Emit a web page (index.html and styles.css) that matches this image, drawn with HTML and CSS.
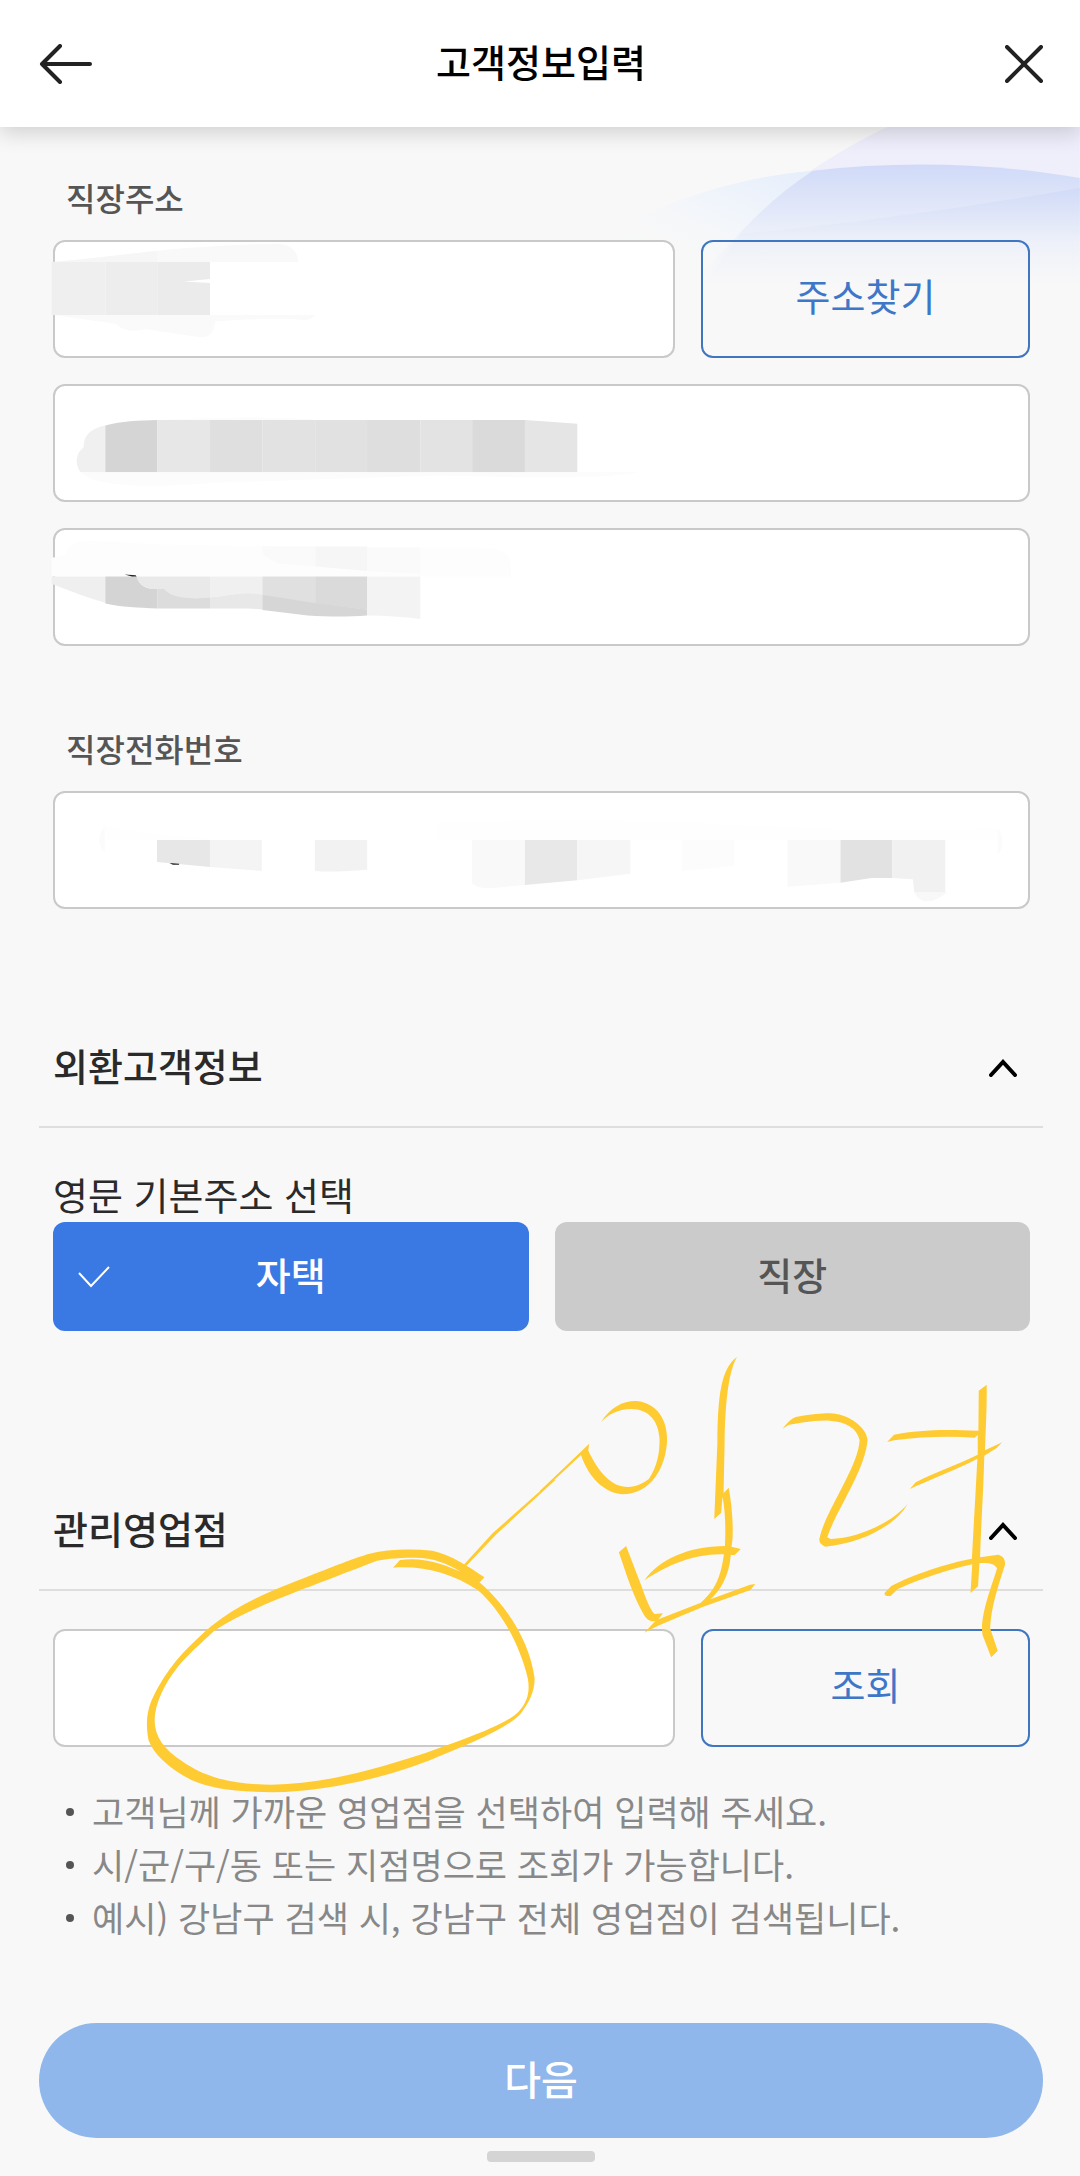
FILE: index.html
```html
<!DOCTYPE html>
<html lang="ko">
<head>
<meta charset="utf-8">
<meta name="viewport" content="width=device-width, initial-scale=1">
<title>고객정보입력</title>
<link rel="stylesheet" href="styles.css">
</head>
<body>
<div class="page">
  <header class="topbar">
    <button class="icon-button" type="button" aria-label="뒤로">
      <svg width="54" height="40" viewBox="0 0 54 40" fill="none" stroke="#222" stroke-width="4" stroke-linecap="round" stroke-linejoin="round"><path d="M21 2 3 20 21 38M3 20H51"/></svg>
    </button>
    <h1 class="topbar-title">고객정보입력</h1>
    <button class="icon-button" type="button" aria-label="닫기">
      <svg width="38" height="38" viewBox="0 0 38 38" fill="none" stroke="#222" stroke-width="4" stroke-linecap="round"><path d="M2 2 36 36M36 2 2 36"/></svg>
    </button>
  </header>

  <svg class="backdrop" viewBox="850 381 718 500" preserveAspectRatio="none" aria-hidden="true">
    <defs>
      <linearGradient id="lilac" x1="0" y1="0" x2="0" y2="1"><stop offset="0" stop-color="#eeedfb"/><stop offset=".45" stop-color="#f0f0fb"/><stop offset="1" stop-color="#f8f8f8" stop-opacity="0"/></linearGradient>
      <linearGradient id="sky" x1="1" y1="0" x2=".3" y2=".8"><stop offset="0" stop-color="#e6eefb"/><stop offset=".5" stop-color="#f2f6fb"/><stop offset="1" stop-color="#f8f8f8" stop-opacity="0"/></linearGradient>
      <linearGradient id="wave" x1="0" y1="0" x2="0" y2="1"><stop offset="0" stop-color="#d0daf8"/><stop offset=".6" stop-color="#eef1fa"/><stop offset="1" stop-color="#f8f8f8" stop-opacity="0"/></linearGradient>
      <linearGradient id="fold" x1="0" y1="0" x2="0" y2="1"><stop offset="0" stop-color="#cdd8f7"/><stop offset=".55" stop-color="#edf0f9"/><stop offset="1" stop-color="#f8f8f8"/></linearGradient>
    </defs>
    <path fill="url(#lilac)" d="M1290 381H1568V860H1010C1050 730 1130 540 1290 381Z"/>
    <path fill="url(#sky)" d="M860 720C980 590 1080 530 1182 512L1080 700 1010 860H850Z"/>
    <path fill="url(#wave)" d="M1182 512C1310 480 1450 490 1568 534V860H1010C1060 730 1110 610 1182 512Z"/>
    <path fill="url(#fold)" opacity=".7" d="M1568 564C1400 622 1240 670 1080 700L1020 860H1568Z"/>
  </svg>

  <main class="form">
    <section class="group">
      <label class="label" for="zip">직장주소</label>
      <div class="fields">
        <div class="split">
          <div class="field">
            <input class="input" id="zip" type="text">
            <svg class="mask" viewBox="115 30 1355 353" preserveAspectRatio="none" aria-hidden="true">
              <path fill="#f9f9f9" d="M115 96C250 82 340 50 600 41C635 41 648 65 649 96Z"/>
              <path fill="#f6f6f6" d="M115 96 229 80 342 63V96Z"/>
              <path fill="#efefef" d="M112 96H229V254H112Z"/><path fill="#ededed" d="M229 96H342V254H229Z"/>
              <path fill="#ebebeb" d="M342 96H457V147L400 154 457 159V254H342Z"/>
              <path fill="#fafafa" d="M118 254H687C675 272 660 270 640 267C580 264 520 268 469 273C465 310 455 322 435 321L318 297C295 304 270 305 253 281Z"/>
            </svg>
          </div>
          <button class="outline-button" type="button">주소찾기</button>
        </div>
        <div class="field">
          <input class="input" type="text" aria-label="직장 기본주소">
          <svg class="mask" viewBox="115 462 2128 353" preserveAspectRatio="none" aria-hidden="true">
            <path fill="#f0f0f0" d="M229 586C195 595 180 620 182 651C164 670 162 700 175 726H229Z"/>
            <path fill="#d5d5d5" d="M229 586C265 573 300 572 342 570V726H229Z"/>
            <path fill="#e7e7e7" d="M342 570H457V726H342Z"/><path fill="#dfdfdf" d="M457 570H571V726H457Z"/>
            <path fill="#e2e2e2" d="M571 570H686V726H571Z"/><path fill="#e1e1e1" d="M686 570H799V726H686Z"/>
            <path fill="#dedede" d="M799 570H915V726H799Z"/><path fill="#e3e3e3" d="M915 570H1028V726H915Z"/>
            <path fill="#dadada" d="M1028 570H1143V726H1028Z"/><path fill="#e5e5e5" d="M1143 570 1257 581V726H1143Z"/>
            <path fill="#fcfcfc" d="M175 726H1395C1320 742 1260 742 1130 741L950 736 480 757C350 772 210 775 175 726ZM342 570C480 560 620 560 690 570Z"/>
          </svg>
        </div>
        <div class="field">
          <input class="input" type="text" aria-label="직장 상세주소">
          <svg class="mask" viewBox="115 895 2128 355" preserveAspectRatio="none" aria-hidden="true">
            <path fill="#fdfdfd" d="M112 985 143 975C145 950 160 933 190 933L342 944 571 950 1070 957C1105 960 1115 985 1112 1041H112Z"/>
            <path fill="#f6f6f6" d="M686 951H799V1024L686 1011Z"/><path fill="#fafafa" d="M571 951H686V1011L605 1002 571 975ZM799 953H915V1033L799 1024Z"/>
            <path fill="#efefef" d="M112 1041H229V1120C190 1105 150 1085 112 1063Z"/>
            <path fill="#d4d4d4" d="M229 1041H297C305 1070 315 1079 342 1077V1137C300 1134 265 1133 229 1122Z"/>
            <path fill="#e9e9e9" d="M297 1041H457V1105L400 1107C370 1100 365 1090 357 1077H325C307 1070 301 1060 297 1041Z"/>
            <path fill="#dcdcdc" d="M342 1077H357C370 1105 410 1110 457 1104V1137H342Z"/>
            <path fill="#f0f0f0" d="M457 1041H571V1095C530 1085 500 1098 457 1104Z"/><path fill="#e8e8e8" d="M457 1104C500 1098 530 1085 571 1095V1140L540 1137H457Z"/>
            <path fill="#e0e0e0" d="M571 1041H686V1122L571 1097Z"/><path fill="#dadada" d="M686 1041H799V1141L686 1122Z"/>
            <path fill="#d6d6d6" d="M571 1096 686 1121 799 1140V1158C750 1163 710 1161 670 1158L571 1142Z"/>
            <path fill="#f3f3f3" d="M799 1041H915V1169C880 1162 840 1158 799 1158Z"/>
            <path fill="#222" d="M271 1035 295 1037 297 1041H287Z"/>
          </svg>
        </div>
      </div>
    </section>

    <section class="group phone">
      <label class="label" for="tel">직장전화번호</label>
      <div class="field">
        <input class="input" id="tel" type="tel">
        <svg class="mask" viewBox="77 273 1418 354" preserveAspectRatio="none" aria-hidden="true">
          <path fill="#fefefe" d="M152 378V420L330 418C240 408 190 395 152 378ZM635 420V370C780 352 950 360 1060 375L1300 392 1448 384V420Z"/>
          <path fill="#fbfbfb" d="M152 378C140 410 143 440 152 458ZM1448 384C1458 410 1456 445 1448 465Z"/>
          <path fill="#e7e7e7" d="M228 420H305V501L228 486Z"/><path fill="#f4f4f4" d="M305 420H380V513L305 501Z"/>
          <path fill="#f2f2f2" d="M457 420H533V509C505 513 480 517 457 513Z"/>
          <path fill="#f9f9f9" d="M685 420H762V555L710 565C698 565 690 559 685 550Z"/><path fill="#e8e8e8" d="M762 420H838V541L762 555Z"/><path fill="#f6f6f6" d="M838 420H915V521L838 541Z"/>
          <path fill="#fcfcfc" d="M990 420H1066V498L990 513Z"/>
          <path fill="#f9f9f9" d="M1143 420H1220V548L1143 560Z"/><path fill="#e2e2e2" d="M1220 420H1295V534H1265L1220 548Z"/><path fill="#f1f1f1" d="M1295 420H1372V576H1327L1325 538 1295 534Z"/>
          <path fill="#f8f8f8" d="M1327 576H1376C1365 590 1358 604 1346 604C1335 602 1330 591 1327 576Z"/>
          <path fill="#222" d="M246 489 260 491V494H251Z"/>
        </svg>
      </div>
    </section>

    <section class="panel">
      <div class="panel-head">
        <h2 class="panel-title">외환고객정보</h2>
        <button class="icon-button" type="button" aria-label="외환고객정보 접기">
          <svg width="28" height="18" viewBox="0 0 28 18" fill="none" stroke="#000" stroke-width="4" stroke-linecap="round" stroke-linejoin="miter"><path d="M2 16 14 3 26 16"/></svg>
        </button>
      </div>
      <div class="panel-body">
        <p class="question">영문 기본주소 선택</p>
        <div class="choices">
          <button class="choice choice-on" type="button" aria-pressed="true">
            <svg class="tick" width="32" height="22" viewBox="0 0 32 22" fill="none" stroke="#fff" stroke-width="2"><path d="M1 7 13 20 31 1"/></svg>자택
          </button>
          <button class="choice" type="button" aria-pressed="false">직장</button>
        </div>
      </div>
    </section>

    <section class="panel branch">
      <div class="panel-head">
        <h2 class="panel-title">관리영업점</h2>
        <button class="icon-button" type="button" aria-label="관리영업점 접기">
          <svg width="28" height="18" viewBox="0 0 28 18" fill="none" stroke="#000" stroke-width="4" stroke-linecap="round" stroke-linejoin="miter"><path d="M2 16 14 3 26 16"/></svg>
        </button>
      </div>
      <div class="panel-body search">
        <div class="split">
          <div class="field"><input class="input" type="text" aria-label="관리영업점"></div>
          <button class="outline-button" type="button">조회</button>
        </div>
        <ul class="notes">
          <li>고객님께 가까운 영업점을 선택하여 입력해 주세요.</li>
          <li>시/군/구/동 또는 지점명으로 조회가 가능합니다.</li>
          <li>예시) 강남구 검색 시, 강남구 전체 영업점이 검색됩니다.</li>
        </ul>
      </div>
    </section>
  </main>

  <footer class="bottom">
    <button class="next" type="button">다음</button>
    <span class="handle"></span>
  </footer>

  <!-- Pen marks drawn over the form -->
  <svg class="ink" viewBox="0 0 1080 2176" fill="#ffcb32" aria-hidden="true">
    <g transform="translate(540 1330) scale(.3444 .3333)">
      <path d="M177 276C205 232 240 212 281 213C340 220 370 270 369 330C366 410 325 492 238 493C185 488 140 440 119 375L0 490V482L143 341 140 361C170 430 210 472 256 471C280 470 300 460 316 447C340 410 348 370 347 325C343 270 315 238 265 237C225 238 200 253 177 276Z"/>
      <path d="M572 81C550 120 538 200 536 340L533 490 548 473C560 540 563 620 556 650L583 657 565 675H554C550 740 520 785 495 808L610 764 625 762 611 780 470 832C410 858 360 878 303 908L335 873C320 877 310 868 302 855C270 800 250 730 229 667L250 648 296 772C305 800 320 840 332 852L357 850 344 868 467 818C510 780 525 740 534 673C450 670 370 705 303 751C350 685 430 650 537 648C539 600 539 550 530 500L526 548 506 567 515 340C516 200 525 115 572 81Z"/>
      <path d="M704 296C725 270 735 262 747 260C810 250 840 248 860 252C910 260 950 300 951 330C945 420 860 540 834 622L844 627C920 625 1020 580 1068 521C1030 590 930 640 828 650C815 645 808 635 812 623C830 540 925 410 928 330C920 295 890 275 840 272C790 270 745 282 723 284Z"/>
      <path d="M1008 336 1028 314C1100 300 1160 297 1273 302L1274 182 1297 164C1298 230 1294 300 1292 361L1342 337 1326 354 1290 377C1288 480 1280 590 1278 682L1330 674C1345 677 1352 690 1350 705C1330 770 1310 830 1307 895L1329 962 1310 982 1285 915C1275 860 1315 760 1327 715C1320 702 1310 698 1276 699L1272 769 1250 789 1255 703C1180 720 1110 745 1039 777L1018 798C1005 800 998 795 1001 788L1020 768C1080 735 1180 700 1254 686L1270 386C1210 418 1150 442 1094 467L1074 477 1091 457C1150 425 1210 405 1271 374V315L1262 323C1190 318 1110 320 1028 331Z"/>
    </g>
    <g transform="translate(0 1480) scale(.3827 .3333)">
      <path d="M1212 254 1287 160 1444 0H1451L1297 163 1219 257Z"/>
      <path d="M1266 292 1250 311C1215 285 1170 240 1100 234C1060 232 1030 234 985 242C910 275 850 302 790 328C710 365 630 400 560 452C525 490 490 525 465 560C430 610 405 670 404 720C404 770 430 810 475 843C550 905 640 914 710 914C830 912 950 880 1110 820C1230 770 1320 735 1355 695C1380 665 1385 630 1379 595C1360 500 1310 390 1248 330C1180 280 1110 257 1027 263L1045 240C1110 230 1160 253 1212 280L1256 310C1330 385 1385 490 1397 595C1397 640 1380 670 1360 702C1320 750 1220 795 1120 842C1010 890 860 935 710 937C610 935 550 925 500 900C440 865 400 820 388 780C375 700 395 660 415 618C450 545 500 490 550 440C610 385 680 345 760 310C850 270 900 245 960 223C1010 208 1070 206 1130 212C1180 225 1225 260 1266 292Z"/>
    </g>
  </svg>
</div>
</body>
</html>
```
FILE: styles.css
```css
* { box-sizing: border-box; }

body {
  margin: 0;
  background: #f8f8f8;
  color: #2a2a2a;
  font-family: "Noto Sans CJK KR", "Noto Sans", sans-serif;
  font-size: 38px;
  line-height: 56px;
}

button, input { font: inherit; color: inherit; }

button {
  margin: 0;
  padding: 0;
  border: 0;
  background: none;
}

h1, h2, p, ul { margin: 0; padding: 0; font-size: inherit; }
svg { display: block; }

.page { position: relative; }

.topbar {
  position: relative;
  z-index: 1;
  display: grid;
  grid-template-columns: 54px 1fr 54px;
  align-items: center;
  height: 127px;
  padding: 0 37px 0 39px;
  background: #fff;
  box-shadow: 0 6px 20px rgba(0, 0, 0, .16);
}

.topbar-title {
  padding-bottom: 6px;
  color: #000;
  font-weight: 500;
  text-align: center;
}

.topbar .icon-button:last-child { justify-self: end; }

.backdrop {
  position: absolute;
  top: 127px;
  right: 0;
  width: 46%;
  height: 167px;
}

.form {
  position: relative;
  padding: 46px 37px 0 39px;
}

.group { padding: 0 13px 0 14px; }
.phone { padding-top: 78px; }

.label {
  display: block;
  padding: 0 13px;
  margin-bottom: 19px;
  color: #555;
  font-size: 32px;
  font-weight: 500;
  line-height: 48px;
}

.fields { display: grid; gap: 26px; }

.split {
  display: grid;
  grid-template-columns: 622fr 329fr;
  gap: 26px;
}

.field { position: relative; }

.input {
  display: block;
  width: 100%;
  height: 118px;
  padding: 0 24px;
  border: 2px solid #c9c9c9;
  border-radius: 12px;
  background: #fff;
}

.mask {
  position: absolute;
  inset: 0;
  width: 100%;
  height: 100%;
  overflow: visible;
  pointer-events: none;
}

.outline-button {
  padding-bottom: 8px;
  border: 2px solid #3f76bf;
  border-radius: 12px;
  color: #3e77c8;
}

.panel { padding-top: 128px; }
.branch { padding-top: 169px; }

.panel-head {
  display: flex;
  align-items: center;
  justify-content: space-between;
  padding: 0 26px 33px 14px;
  border-bottom: 2px solid #dedede;
}

.panel-head .icon-button { padding-top: 6px; }

.panel-title { font-weight: 500; }
.panel-body { padding: 38px 13px 0 14px; }

.choices {
  display: grid;
  grid-template-columns: 1fr 1fr;
  gap: 26px;
}

.choice {
  position: relative;
  height: 109px;
  padding-bottom: 6px;
  border-radius: 12px;
  background: #cbcbcb;
  color: #555;
  font-weight: 500;
}

.choice-on { background: #3a78e3; color: #fff; }

.tick {
  position: absolute;
  top: 44px;
  left: 25px;
}

.notes {
  display: grid;
  padding: 37px 0 0 39px;
  color: #888;
  font-size: 35px;
  line-height: 53px;
  list-style: none;
}

.notes li { position: relative; }

.notes li::before {
  content: "";
  position: absolute;
  top: 24px;
  left: -26px;
  width: 8px;
  height: 8px;
  border-radius: 50%;
  background: #555;
}

.bottom {
  display: grid;
  justify-items: center;
  gap: 13px;
  padding: 80px 37px 14px 39px;
}

.next {
  width: 100%;
  height: 115px;
  padding-bottom: 6px;
  border-radius: 58px;
  background: #8fb7eb;
  color: #fff;
  font-size: 40px;
  font-weight: 500;
}

.handle {
  width: 108px;
  height: 11px;
  border-radius: 4px;
  background: #d4d4d4;
}

.ink {
  position: absolute;
  top: 0;
  left: 0;
  width: 100%;
  height: auto;
  z-index: 2;
  pointer-events: none;
}
```
